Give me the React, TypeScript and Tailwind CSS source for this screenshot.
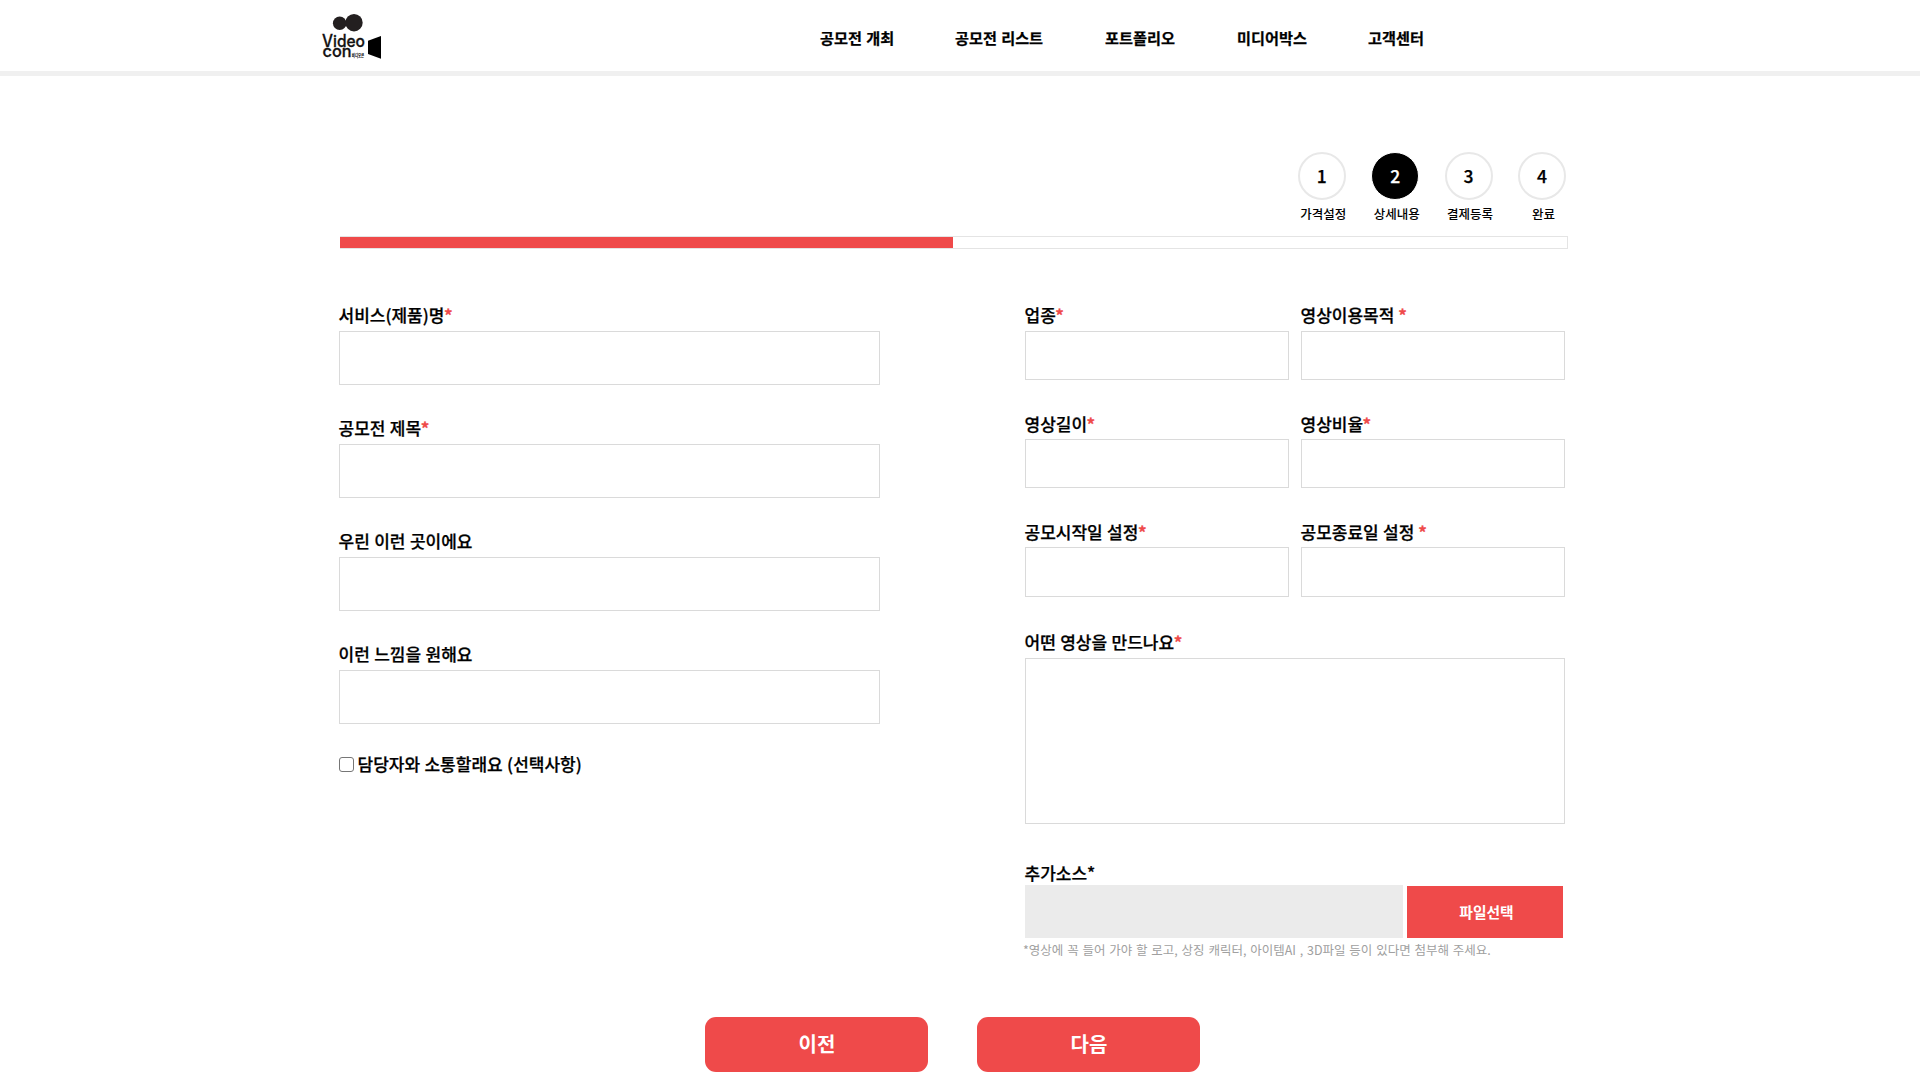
import React from "react";

const NAV = [
  { label: "공모전 개최", className: "w-[75px]" },
  { label: "공모전 리스트", className: "w-[90px] ml-[60px]" },
  { label: "포트폴리오", className: "w-[72px] ml-[60px]" },
  { label: "미디어박스", className: "w-[72px] ml-[60px]" },
  { label: "고객센터", className: "w-[58px] ml-[59px]" },
];

const STEPS = ["가격설정", "상세내용", "결제등록", "완료"];

function Logo() {
  return (
    <svg width="64" height="52" viewBox="0 0 64 52" className="block" aria-label="Videocon">
      <circle cx="21.7" cy="15.3" r="6.8" fill="#231f20" />
      <circle cx="36" cy="14.7" r="8.7" fill="#231f20" />
      <text x="4" y="38.9" textLength="43" lengthAdjust="spacingAndGlyphs" fontFamily="Inter, sans-serif" fontWeight="500" fontSize="16.6" fill="#111" stroke="#111" strokeWidth="0.3">
        Video
      </text>
      <text x="4.6" y="49.3" textLength="29" lengthAdjust="spacingAndGlyphs" fontFamily="Inter, sans-serif" fontWeight="500" fontSize="16.4" fill="#111" stroke="#111" strokeWidth="0.3">
        con
      </text>
      <text x="33.8" y="49.2" textLength="12.4" lengthAdjust="spacingAndGlyphs" fontFamily="'Noto Sans CJK KR', sans-serif" fontWeight="900" fontSize="4.4" fill="#111">
        비디오콘
      </text>
      <path d="M50 32.8 L63 28 V50.8 L50 46 Z" fill="#000" />
    </svg>
  );
}

function Label({ text, star, className = "" }: { text: string; star?: string; className?: string }) {
  return (
    <label className={"block pt-px whitespace-pre text-[17px] leading-6 font-medium [text-indent:-0.5px] [word-spacing:0.6px] [-webkit-text-stroke:0.25px] " + className}>
      {text}
      {star && <span className="-ml-[0.5px] font-bold text-[#ef4a4a]">{star}</span>}
    </label>
  );
}

function Field({ text, star, label, input }: { text: string; star?: string; label: string; input: string }) {
  return (
    <div>
      <Label text={text} star={star} className={label} />
      <input className={"block w-full border border-[#dadada] bg-white px-3 outline-none " + input} />
    </div>
  );
}

export default function App() {
  return (
    <div className="h-[1080px] w-[1920px] overflow-hidden bg-white text-black [font-family:'Noto_Sans_CJK_KR',sans-serif]">
      <header className="flex h-[76px] border-b-[5px] border-[#f0f0f0]">
        <div className="ml-[318px] mt-2 w-16">
          <Logo />
        </div>
        <nav className="ml-[438px] mt-[25px] flex text-[15.2px] leading-6 font-bold [word-spacing:0.8px] [-webkit-text-stroke:0.25px]">
          {NAV.map((n) => (
            <a key={n.label} className={"whitespace-nowrap " + n.className}>
              {n.label}
            </a>
          ))}
        </nav>
      </header>

      <main className="ml-[339px] w-[1229px]">
        <ol className="flex justify-end gap-[25.4px] pt-[76px] pr-[2px]">
          {STEPS.map((s, i) => (
            <li key={s} className="flex w-12 flex-col items-center">
              <span
                className={
                  "flex size-12 items-center justify-center rounded-full pt-px text-[17.5px] font-medium [-webkit-text-stroke:0.25px] " +
                  (i === 1 ? "border border-white bg-black text-white" : "border-2 border-[#e8e8e8]")
                }
              >
                {i + 1}
              </span>
              <span className="ml-[3px] mt-1 text-[12.5px] leading-5 font-medium whitespace-nowrap">{s}</span>
            </li>
          ))}
        </ol>

        <div className="mt-3 ml-px h-[13px] border border-[#e4e4e4]">
          <div className="-ml-px h-[11px] w-1/2 bg-[#ef4a4a]" />
        </div>

        <div className="flex justify-between pr-[3px] pt-[53px]">
          <form className="flex w-[541px] flex-col gap-[30px]">
            <Field text="서비스(제품)명" star="*" label="h-[29px]" input="h-[54px]" />
            <Field text="공모전 제목" star="*" label="h-[29px]" input="h-[54px]" />
            <Field text="우린 이런 곳이에요" label="h-[29px]" input="h-[54px]" />
            <Field text="이런 느낌을 원해요" label="h-[29px]" input="h-[54px]" />
            <div className="-mt-[3px] flex">
              <input type="checkbox" className="mt-[6px] size-[15px] appearance-none rounded-[3px] border border-[#767676] bg-white" />
              <Label text="담당자와 소통할래요 (선택사항)" className="ml-1" />
            </div>
          </form>

          <form className="w-[540px]">
            <div className="grid grid-cols-2 gap-x-3">
              <Field text="업종" star="*" label="h-[29px]" input="h-[49px]" />
              <Field text="영상이용목적" star=" *" label="h-[29px]" input="h-[49px]" />
            </div>
            <div className="mt-[31px] grid grid-cols-2 gap-x-3">
              <Field text="영상길이" star="*" label="h-[28px]" input="h-[49px]" />
              <Field text="영상비율" star="*" label="h-[28px]" input="h-[49px]" />
            </div>
            <div className="mt-[31px] grid grid-cols-2 gap-x-3">
              <Field text="공모시작일 설정" star="*" label="h-[28px]" input="h-[50px]" />
              <Field text="공모종료일 설정" star=" *" label="h-[28px]" input="h-[50px]" />
            </div>
            <div className="mt-8">
              <Label text="어떤 영상을 만드나요" star="*" className="h-[29px]" />
              <textarea className="block h-[166px] w-full resize-none border border-[#dadada] outline-none" />
            </div>
            <div className="mt-9">
              <Label text="추가소스*" className="h-[25px]" />
              <div className="flex h-[53px] gap-1">
                <div className="w-[378px] bg-[#ebebeb]" />
                <button className="mt-px w-[156px] bg-[#ef4a4a] pl-[3px] text-[14.8px] font-bold text-white">파일선택</button>
              </div>
              <p className="-ml-[2px] mt-[2px] text-[12.5px] leading-5 whitespace-nowrap text-[#a0a0a0] [word-spacing:1px]">
                *영상에 꼭 들어 가야 할 로고, 상징 캐릭터, 아이템AI , 3D파일 등이 있다면 첨부해 주세요.
              </p>
            </div>
          </form>
        </div>

        <div className="ml-[366px] mt-[57px] flex gap-[49px]">
          <button className="h-[55px] w-[223px] rounded-[11px] bg-[#ef4a4a] pb-[2px] pl-px text-[20px] font-bold text-white">이전</button>
          <button className="h-[55px] w-[223px] rounded-[11px] bg-[#ef4a4a] pb-[2px] pl-px text-[20px] font-bold text-white">다음</button>
        </div>
      </main>
    </div>
  );
}
